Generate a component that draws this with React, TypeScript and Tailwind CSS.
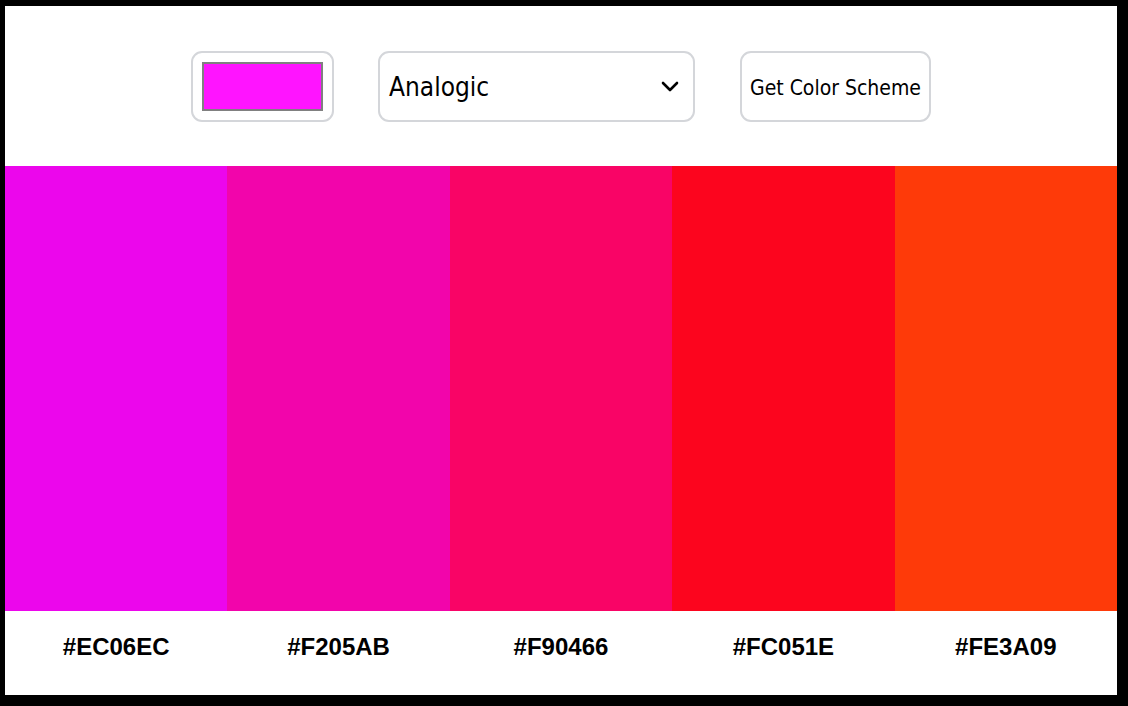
import React from "react";

const colors = ["#EC06EC", "#F205AB", "#F90466", "#FC051E", "#FE3A09"];

export default function App() {
  return (
    <div className="w-[1128px] h-[706px] bg-black pl-[5px] pt-[6px]">
      <div className="w-[1112px] h-[689px] bg-white flex flex-col">
        <div className="h-[160px] flex items-center justify-center">
          <div className="w-[143px] h-[71px] border-2 border-[#d4d6da] rounded-[11px] flex items-center justify-center">
            <div className="w-[121px] h-[49px] border-2 border-[#808080] bg-[#ff14ff]" />
          </div>
          <div className="ml-[44px] w-[317px] h-[71px] border-2 border-[#d4d6da] rounded-[11px] flex items-center justify-between pl-[9px] pr-[11px]">
            <span className="text-[26px] text-black pt-[3px]" style={{ fontFamily: '"DejaVu Sans Condensed", "DejaVu Sans", sans-serif' }}>
              Analogic
            </span>
            <svg width="24" height="24" viewBox="0 0 24 24" fill="none" stroke="black" strokeWidth="2.6" strokeLinecap="round" strokeLinejoin="round">
              <path d="M5 9l7 7 7-7" />
            </svg>
          </div>
          <div className="ml-[45px] w-[191px] h-[71px] border-2 border-[#d4d6da] rounded-[11px] flex items-center justify-center">
            <span className="text-[21px] text-black pt-[5px]" style={{ fontFamily: '"DejaVu Sans Condensed", "DejaVu Sans", sans-serif' }}>
              Get Color Scheme
            </span>
          </div>
        </div>
        <div className="h-[445px] grid grid-cols-5">
          {colors.map((c) => (
            <div key={c} style={{ backgroundColor: c }} />
          ))}
        </div>
        <div className="flex-1 grid grid-cols-5 items-center pb-[12px]">
          {colors.map((c) => (
            <div key={c} className="text-center text-[24px] font-bold text-black" style={{ fontFamily: '"Liberation Sans", Arial, sans-serif' }}>
              {c}
            </div>
          ))}
        </div>
      </div>
    </div>
  );
}
